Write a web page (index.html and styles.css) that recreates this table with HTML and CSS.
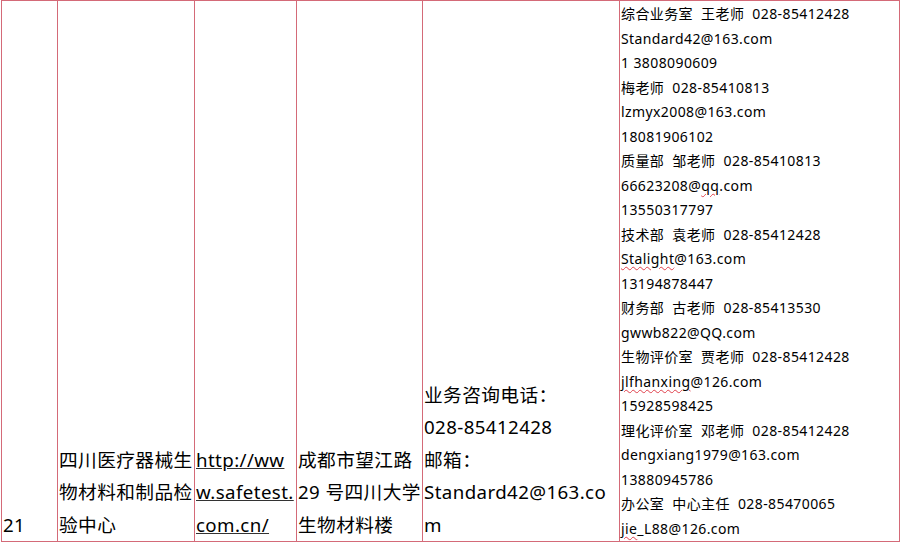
FILE: index.html
```html
<!DOCTYPE html>
<html lang="zh-CN">
<head>
    <meta charset="UTF-8">
    <title>检验机构联系表</title>
    <link rel="stylesheet" href="styles.css">
</head>
<body>
    <table class="org-table">
        <colgroup>
            <col class="c-no">
            <col class="c-name">
            <col class="c-site">
            <col class="c-addr">
            <col class="c-consult">
            <col class="c-contact">
        </colgroup>
        <tr>
            <td class="big">21</td>
            <td class="big">四川医疗器械生物材料和制品检验中心</td>
            <td class="big wrap"><a href="http://www.safetest.com.cn/">http://www.safetest.com.cn/</a></td>
            <td class="big">成都市望江路29 号四川大学生物材料楼</td>
            <td class="big wrap">业务咨询电话：<br>028-85412428<br>邮箱：<br>Standard42@163.com</td>
            <td class="contact">
                <div>综合业务室  王老师  028-85412428</div>
                <div>Standard42@163.com</div>
                <div>1 3808090609</div>
                <div>梅老师  028-85410813</div>
                <div>lzmyx2008@163.com</div>
                <div>18081906102</div>
                <div>质量部  邹老师  028-85410813</div>
                <div>66623208@<span class="spell">qq</span>.com</div>
                <div>13550317797</div>
                <div>技术部  袁老师  028-85412428</div>
                <div><span class="spell">Stalight</span>@163.com</div>
                <div>13194878447</div>
                <div>财务部  古老师  028-85413530</div>
                <div>gwwb822@QQ.com</div>
                <div>生物评价室  贾老师  028-85412428</div>
                <div><span class="spell">jlfhanxing</span>@126.com</div>
                <div>15928598425</div>
                <div>理化评价室  邓老师  028-85412428</div>
                <div>dengxiang1979@163.com</div>
                <div>13880945786</div>
                <div>办公室  中心主任  028-85470065</div>
                <div><span class="spell">jie</span>_L88@126.com</div>
            </td>
        </tr>
    </table>
</body>
</html>
```

FILE: styles.css
```css
body {
    margin: 0;
    background: #fff;
    color: #000;
    font-family: "Noto Sans", "Noto Sans CJK SC", sans-serif;
}
.org-table {
    margin-left: 1px;
    width: 898px;
    table-layout: fixed;
    border-collapse: collapse;
}
.c-no { width: 56px; }
.c-name { width: 137px; }
.c-site { width: 102px; }
.c-addr { width: 126px; }
.c-consult { width: 197px; }
.c-contact { width: 280px; }
.org-table td {
    height: 540px;
    border: 1px solid #d46a78;
    padding: 0 0 0 1px;
    vertical-align: bottom;
    letter-spacing: 0.4px;
}
.big {
    font-size: 18.7px;
    line-height: 32.4px;
}
.wrap {
    word-break: break-all;
}
.big a {
    color: #000;
    text-decoration: underline;
    text-decoration-color: #333;
}
.contact {
    font-size: 14px;
    line-height: 24.5px;
}
.contact div {
    white-space: pre;
}
.spell {
    text-decoration: underline wavy #e0404c;
    text-decoration-thickness: 1px;
    text-underline-offset: 2px;
}
```
